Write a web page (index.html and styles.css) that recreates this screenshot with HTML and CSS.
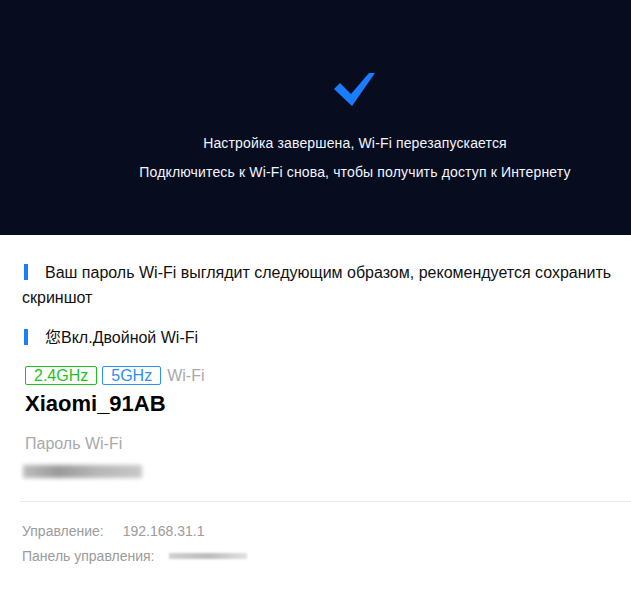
FILE: index.html
```html
<!DOCTYPE html>
<html lang="ru">
<head>
<meta charset="utf-8">
<link rel="stylesheet" href="styles.css">
</head>
<body>
<header class="hero">
  <svg class="check" width="44" height="36" viewBox="0 0 44 36">
    <path d="M1 17 L7 11 L18 22 L36 1 L42 1 L19 34 Z" fill="#1a7dff"/>
  </svg>
  <p class="hero-line first">Настройка завершена, Wi-Fi перезапускается</p>
  <p class="hero-line">Подключитесь к Wi-Fi снова, чтобы получить доступ к Интернету</p>
</header>
<main class="content">
  <p class="note"><span class="bar"></span>Ваш пароль Wi-Fi выглядит следующим образом, рекомендуется сохранить скриншот</p>
  <p class="note second"><span class="bar"></span>您Вкл.Двойной Wi-Fi</p>
  <div class="tags">
    <span class="tag green">2.4GHz</span>
    <span class="tag blue">5GHz</span>
    <span class="tag-label">Wi-Fi</span>
  </div>
  <div class="ssid">Xiaomi_91AB</div>
  <div class="pw-label">Пароль Wi-Fi</div>
  <div class="blur pw"></div>
  <hr class="divider">
  <div class="info first"><span>Управление:</span><span class="ip">192.168.31.1</span></div>
  <div class="info"><span>Панель управления:</span><span class="blur small"></span></div>
</main>
</body>
</html>
```
FILE: styles.css
```css
html, body {
  margin: 0;
  padding: 0;
  background: #fff;
  font-family: "Liberation Sans", Arial, "Noto Sans CJK SC", sans-serif;
}
.hero {
  background: #080c1f;
  height: 235px;
  display: flex;
  flex-direction: column;
  align-items: center;
  box-sizing: border-box;
  padding-top: 72px;
  padding-left: 79px;
}
.check {
  display: block;
}
.hero-line {
  margin: 0;
  color: #f2f6ff;
  font-size: 14px;
  letter-spacing: 0.15px;
  line-height: 16px;
}
.hero-line.first {
  margin-top: 27px;
  margin-bottom: 13px;
}
.content {
  padding: 0 0 0 22px;
}
.note {
  margin: 0;
  padding-top: 25px;
  padding-right: 16px;
  font-size: 16px;
  line-height: 25px;
  color: #111;
}
.note.second {
  padding-top: 15px;
}
.bar {
  display: inline-block;
  width: 4px;
  height: 16px;
  background: #1a7dff;
  margin-left: 2px;
  margin-right: 17px;
  vertical-align: -2px;
}
.tags {
  margin-top: 16px;
  margin-left: 3px;
  display: flex;
  align-items: center;
  gap: 5px;
  font-size: 16px;
}
.tag {
  border: 1px solid;
  border-radius: 2px;
  padding: 0 8px;
  line-height: 17px;
}
.tag.green { color: #1fc11f; border-color: #1fc11f; }
.tag.blue { color: #2d8fef; border-color: #2d8fef; }
.tag-label { color: #a9a9a9; margin-left: 1px; }
.ssid {
  margin-left: 3px;
  margin-top: 7px;
  font-size: 22px;
  font-weight: bold;
  color: #000;
  line-height: 24px;
}
.pw-label {
  margin-left: 3px;
  margin-top: 18px;
  font-size: 16px;
  color: #a9a9a9;
  line-height: 20px;
}
.blur {
  display: inline-block;
  background: linear-gradient(90deg, #bdbdbd, #9a9a9a 30%, #b5b5b5 60%, #c8c8c8);
  filter: blur(2px);
}
.pw {
  display: block;
  width: 119px;
  height: 13px;
  margin-top: 11px;
  margin-left: 1px;
}
.divider {
  border: 0;
  border-top: 1px solid #e6e6e6;
  margin: 23px 0 0 -2px;
}
.info {
  font-size: 14px;
  color: #9b9b9b;
  line-height: 16px;
  margin-top: 9px;
  display: flex;
  align-items: center;
}
.info.first { margin-top: 21px; }
.ip { margin-left: 19px; }
.blur.small {
  width: 78px;
  height: 6px;
  margin-left: 14px;
  background: linear-gradient(90deg, #d0d0d0, #bcbcbc 50%, #e2e2e2);
  filter: blur(1px);
}
```
